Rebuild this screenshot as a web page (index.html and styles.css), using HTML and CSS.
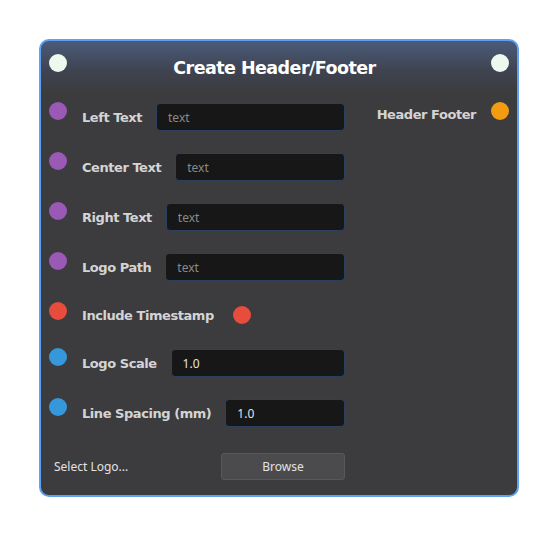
FILE: index.html
```html
<!DOCTYPE html>
<html>
<head>
<meta charset="utf-8">
<link rel="stylesheet" href="styles.css">
</head>
<body>
<div class="node">
  <div class="header">
    <span class="dot white"></span>
    <h1 class="title">Create Header/Footer</h1>
    <span class="dot white"></span>
  </div>
  <div class="content">
    <div class="inputs">
      <div class="row">
        <span class="dot purple"></span>
        <div class="field"><span class="label">Left Text</span><input class="text-input" placeholder="text"></div>
      </div>
      <div class="row">
        <span class="dot purple"></span>
        <div class="field"><span class="label">Center Text</span><input class="text-input" placeholder="text"></div>
      </div>
      <div class="row">
        <span class="dot purple"></span>
        <div class="field"><span class="label">Right Text</span><input class="text-input" placeholder="text"></div>
      </div>
      <div class="row">
        <span class="dot purple"></span>
        <div class="field"><span class="label">Logo Path</span><input class="text-input" placeholder="text"></div>
      </div>
      <div class="row">
        <span class="dot red"></span>
        <div class="field short"><span class="label">Include Timestamp</span><span class="dot red toggle"></span></div>
      </div>
      <div class="row">
        <span class="dot blue"></span>
        <div class="field"><span class="label">Logo Scale</span><input class="text-input" value="1.0"></div>
      </div>
      <div class="row">
        <span class="dot blue"></span>
        <div class="field"><span class="label">Line Spacing (mm)</span><input class="text-input" value="1.0"></div>
      </div>
    </div>
    <div class="outputs">
      <span class="label out-label">Header Footer</span>
      <span class="dot orange"></span>
    </div>
  </div>
  <div class="footer">
    <span class="select">Select Logo...</span>
    <button class="browse">Browse</button>
  </div>
</div>
</body>
</html>
```
FILE: styles.css
```css
html, body {
  margin: 0;
  padding: 0;
  background: #ffffff;
}

.node {
  margin: 39px 0 0 39px;
  width: 476px;
  height: 454px;
  border: 2px solid #5ba2f4;
  border-radius: 10px;
  background: linear-gradient(to bottom, #4a5b79 0px, #3f4350 30px, #3c3c3e 52px, #3c3c3e 100%);
  font-family: "DejaVu Sans", Verdana, sans-serif;
}

.header {
  display: flex;
  align-items: flex-start;
  justify-content: space-between;
  height: 28px;
  padding: 13px 8px 0;
}

.title {
  margin: 4px 9px 0 0;
  font-size: 17.5px;
  line-height: 20px;
  font-weight: bold;
  letter-spacing: -0.55px;
  color: #ffffff;
}

.dot {
  display: block;
  flex: none;
  width: 18px;
  height: 18px;
  border-radius: 50%;
}

.white { background: #eef8ee; }
.purple { background: #9b59b6; }
.red { background: #e74c3c; }
.blue { background: #3498db; }
.orange { background: #f39c12; }

.content {
  display: flex;
  justify-content: space-between;
  padding: 0 8px;
  margin-top: 20px;
}

.inputs {
  width: 296px;
  display: flex;
  flex-direction: column;
  gap: 20px;
}

.row {
  display: flex;
  align-items: flex-start;
}

.field {
  flex: 1 1 0;
  min-width: 0;
  display: flex;
  align-items: center;
  height: 30px;
  margin-left: 15px;
  gap: 14px;
}

.field.short {
  height: 26px;
  gap: 19px;
}

.label {
  font-size: 13px;
  font-weight: bold;
  letter-spacing: -0.45px;
  color: #d4d4d4;
  white-space: nowrap;
}

.text-input {
  flex: 1 1 0;
  width: 0;
  min-width: 0;
  height: 28px;
  box-sizing: border-box;
  margin: 0;
  padding: 0 11px;
  background: #171717;
  border: 1px solid #2d4060;
  border-radius: 4px;
  color: #e4e4e4;
  font-family: "Noto Sans", "Open Sans", sans-serif;
  font-size: 12px;
  outline: none;
}

.text-input::placeholder {
  color: #8a8a8a;
}

.outputs {
  display: flex;
  align-items: flex-start;
  gap: 15px;
}

.out-label {
  margin-top: 4px;
  line-height: 18px;
}

.footer {
  display: flex;
  align-items: center;
  justify-content: space-between;
  height: 27px;
  margin-top: 25px;
  padding: 0 172px 0 13px;
}

.select {
  font-family: "Noto Sans", "Open Sans", sans-serif;
  font-size: 12px;
  color: #e2e2e2;
}

.browse {
  width: 124px;
  height: 27px;
  margin: 0;
  padding: 0;
  background: #4b4b4d;
  border: 1px solid #58585a;
  border-radius: 3px;
  color: #e2e2e2;
  font-family: "Noto Sans", "Open Sans", sans-serif;
  font-size: 12px;
}
```
